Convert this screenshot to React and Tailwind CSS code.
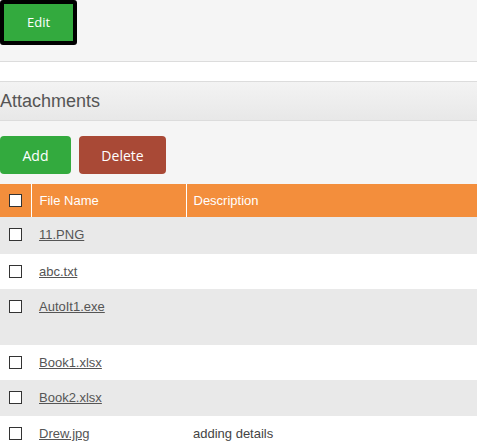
import React from "react";

const rows = [
  { name: "11.PNG", desc: "", h: "h-[37px]", bg: "bg-[#e9e9e9]" },
  { name: "abc.txt", desc: "", h: "h-[35px]", bg: "bg-white" },
  { name: "AutoIt1.exe", desc: "", h: "h-[56px]", bg: "bg-[#e9e9e9]" },
  { name: "Book1.xlsx", desc: "", h: "h-[35px]", bg: "bg-white" },
  { name: "Book2.xlsx", desc: "", h: "h-[36px]", bg: "bg-[#e9e9e9]" },
  { name: "Drew.jpg", desc: "adding details", h: "h-[36px]", bg: "bg-white" },
];

const Box = () => (
  <span className="block w-[13px] h-[13px] border border-[#333] bg-white" />
);

export default function App() {
  return (
    <div className="w-[477px] h-[446px] overflow-hidden bg-[#f5f5f5] font-['Liberation_Sans',Arial,sans-serif]">
      {/* Top toolbar */}
      <div className="h-[62px] border-b border-[#dcdcdc]">
        <button className="w-[77px] h-[45px] pt-[1px] border-4 border-black rounded-[3px] bg-[#33aa3e] text-white text-[13px] font-['Open_Sans',sans-serif]">
          Edit
        </button>
      </div>
      <div className="h-[19px] bg-white" />

      {/* Attachments header */}
      <div className="h-[40px] border-y border-[#dcdcdc] bg-gradient-to-b from-[#f3f3f3] to-[#e8e8e8] flex items-center">
        <h2 className="text-[18px] text-[#555] leading-none">Attachments</h2>
      </div>

      {/* Actions */}
      <div className="flex gap-2 pt-[15px]">
        <button className="w-[71px] h-[38px] rounded-[4px] bg-[#33aa3e] text-white text-[14px] font-['Open_Sans',sans-serif]">
          Add
        </button>
        <button className="w-[87px] h-[38px] rounded-[4px] bg-[#a94936] text-white text-[14px] font-['Open_Sans',sans-serif]">
          Delete
        </button>
      </div>

      {/* Table */}
      <table className="mt-[10px] w-full border-collapse text-[13px] text-left">
        <thead>
          <tr className="h-[33px] bg-[#f38e3c] text-white">
            <th className="w-[31px] pl-[9px] border-r border-white">
              <Box />
            </th>
            <th className="w-[155px] pl-[8px] font-normal border-r border-white">File Name</th>
            <th className="pl-[7px] font-normal">Description</th>
          </tr>
        </thead>
        <tbody>
          {rows.map((r) => (
            <tr key={r.name} className={`${r.h} ${r.bg} align-top`}>
              <td className="pl-[9px] pt-[11px]">
                <Box />
              </td>
              <td className="pl-[8px] pt-[10px] leading-[16px]">
                <a href="#" className="underline text-[#555]">
                  {r.name}
                </a>
              </td>
              <td className="pl-[7px] pt-[10px] leading-[16px] text-[#444]">{r.desc}</td>
            </tr>
          ))}
        </tbody>
      </table>
    </div>
  );
}
